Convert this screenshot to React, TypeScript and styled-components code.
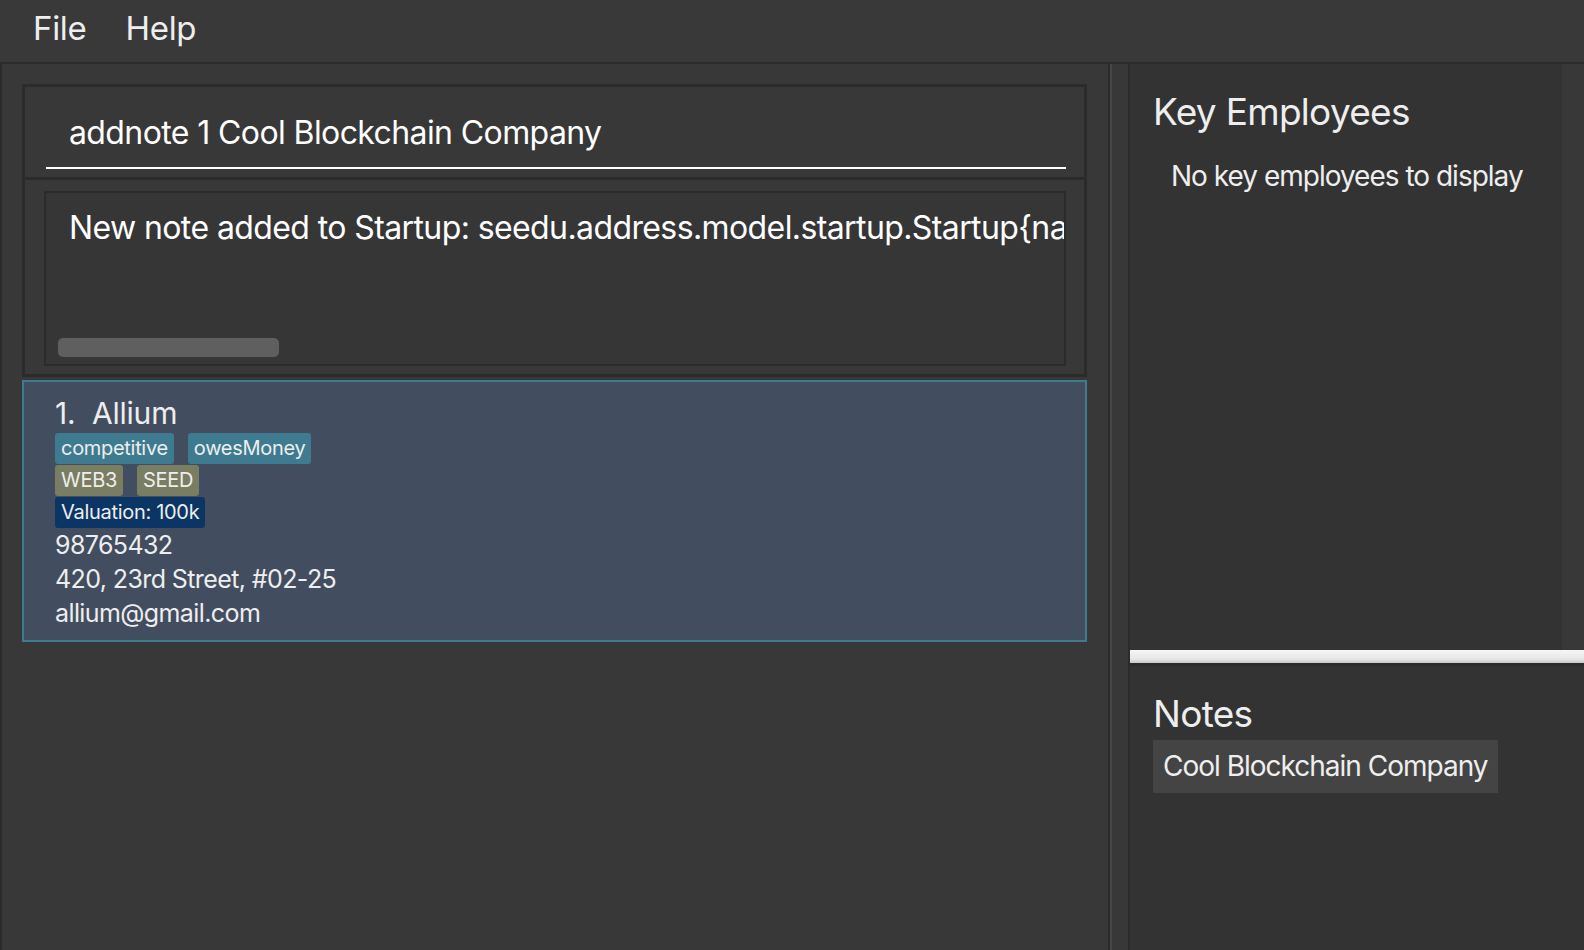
import React from 'react';
import styled, { createGlobalStyle } from 'styled-components';

const Global = createGlobalStyle`
  html, body {
    margin: 0;
    padding: 0;
    background: #383838;
    font-family: Inter, "Noto Sans", sans-serif;
  }
`;

const S = {
  Window: styled.div`
    width: 1584px;
    height: 950px;
    display: flex;
    flex-direction: column;
    overflow: hidden;
    background: #383838;
  `,
  MenuBar: styled.div`
    height: 64px;
    box-sizing: border-box;
    display: flex;
    align-items: center;
    gap: 39px;
    padding: 0 0 5px 33px;
    border-bottom: 2px solid #2b2b2b;
    background: #393939;
  `,
  MenuItem: styled.span`
    color: #eeeeee;
    font-size: 33px;
    line-height: 1;
    letter-spacing: -0.3px;
  `,
  Main: styled.div`
    flex: 1;
    display: flex;
    min-height: 0;
  `,
  LeftPane: styled.div`
    width: 1086px;
    border-left: 2px solid #2b2b2b;
    padding: 20px 0 0 20px;
    display: flex;
    flex-direction: column;
    background: #383838;
  `,
  Splitter: styled.div`
    width: 18px;
    border-left: 2px solid #2b2b2b;
    box-shadow: inset 2px 0 0 #474747;
    background: #383838;
  `,
  CommandBox: styled.div`
    width: 1065px;
    box-sizing: border-box;
    height: 96px;
    border: 3px solid #2b2b2b;
    padding: 0 18px 0 21px;
    display: flex;
    align-items: flex-end;
  `,
  CommandField: styled.div`
    flex: 1;
    height: 79px;
    box-sizing: border-box;
    border-bottom: 2px solid #ffffff;
    padding: 0 0 14px 23px;
    display: flex;
    align-items: flex-end;
    color: #ffffff;
    font-size: 32px;
    line-height: 40px;
    letter-spacing: -0.6px;
    margin-bottom: 8px;
  `,
  ResultOuter: styled.div`
    width: 1065px;
    box-sizing: border-box;
    height: 197px;
    border: 3px solid #2b2b2b;
    border-top: none;
    padding: 11px 18px 8px 19px;
  `,
  ResultInner: styled.div`
    height: 100%;
    box-sizing: border-box;
    border: 2px solid #2b2b2b;
    background: #363636;
    display: flex;
    flex-direction: column;
    justify-content: space-between;
    overflow: hidden;
    padding: 15px 0 7px 0;
  `,
  ResultText: styled.div`
    color: #ffffff;
    font-size: 32px;
    line-height: 40px;
    letter-spacing: -0.6px;
    white-space: nowrap;
    overflow: hidden;
    padding-left: 23px;
    padding-right: 2px;
  `,
  ScrollThumb: styled.div`
    margin-left: 12px;
    width: 221px;
    height: 19px;
    border-radius: 5px;
    background: #5f5f5f;
  `,
  Card: styled.div`
    width: 1065px;
    box-sizing: border-box;
    margin-top: 3px;
    height: 262px;
    border: 2px solid #3e7b91;
    background: #424d5f;
    padding: 12px 0 0 31px;
    color: #eeeeee;
  `,
  CardTitle: styled.div`
    font-size: 30px;
    line-height: 38px;
    letter-spacing: -0.2px;
    white-space: pre;
  `,
  TagRow: styled.div`
    display: flex;
    gap: 14px;
    margin-top: 1px;
  `,
  Tag: styled.span<{ $bg: string }>`
    background: ${(p) => p.$bg};
    color: #eeeeee;
    font-size: 20px;
    line-height: 31px;
    height: 31px;
    padding: 0 6px;
    border-radius: 3px;
    letter-spacing: -0.3px;
  `,
  Field: styled.div`
    font-size: 25px;
    line-height: 34px;
    letter-spacing: -0.6px;
  `,
  RightPane: styled.div`
    flex: 1;
    display: flex;
    flex-direction: column;
    border-left: 2px solid #2b2b2b;
  `,
  Upper: styled.div`
    height: 586px;
    display: flex;
    background: #333333;
  `,
  PanelBody: styled.div<{ $pt: number }>`
    flex: 1;
    padding: ${(p) => p.$pt}px 0 0 23px;
    color: #eeeeee;
  `,
  SideStrip: styled.div`
    width: 22px;
    background: #383838;
  `,
  Heading: styled.div`
    font-size: 37px;
    line-height: 46px;
    letter-spacing: -0.7px;
  `,
  Empty: styled.div`
    font-size: 28px;
    line-height: 36px;
    margin: 23px 0 0 18px;
    letter-spacing: -1px;
  `,
  HSplit: styled.div`
    height: 13px;
    background: linear-gradient(#f6f6f6, #e6e6e6 70%, #c8c8c8);
    border-bottom: 3px solid #2b2b2b;
  `,
  Lower: styled.div`
    flex: 1;
    background: #333333;
    display: flex;
  `,
  NoteChip: styled.div`
    display: inline-block;
    margin-top: 3px;
    background: #444444;
    padding: 0 10px;
    font-size: 28px;
    line-height: 53px;
    letter-spacing: -1px;
  `,
};

export default function App() {
  return (
    <>
      <Global />
      <S.Window>
        <S.MenuBar>
          <S.MenuItem>File</S.MenuItem>
          <S.MenuItem>Help</S.MenuItem>
        </S.MenuBar>
        <S.Main>
          <S.LeftPane>
            <S.CommandBox>
              <S.CommandField>addnote 1 Cool Blockchain Company</S.CommandField>
            </S.CommandBox>
            <S.ResultOuter>
              <S.ResultInner>
                <S.ResultText>
                  New note added to Startup: seedu.address.model.startup.Startup{'{'}name=Allium, phone=98765432,
                  email=allium@gmail.com{'}'}
                </S.ResultText>
                <S.ScrollThumb />
              </S.ResultInner>
            </S.ResultOuter>
            <S.Card>
              <S.CardTitle>1.  Allium</S.CardTitle>
              <S.TagRow>
                <S.Tag $bg="#3e7b91">competitive</S.Tag>
                <S.Tag $bg="#3e7b91">owesMoney</S.Tag>
              </S.TagRow>
              <S.TagRow>
                <S.Tag $bg="#797d61">WEB3</S.Tag>
                <S.Tag $bg="#797d61">SEED</S.Tag>
              </S.TagRow>
              <S.TagRow>
                <S.Tag $bg="#0b3564">Valuation: 100k</S.Tag>
              </S.TagRow>
              <S.Field>98765432</S.Field>
              <S.Field>420, 23rd Street, #02-25</S.Field>
              <S.Field>allium@gmail.com</S.Field>
            </S.Card>
          </S.LeftPane>
          <S.Splitter />
          <S.RightPane>
            <S.Upper>
              <S.PanelBody $pt={25}>
                <S.Heading>Key Employees</S.Heading>
                <S.Empty>No key employees to display</S.Empty>
              </S.PanelBody>
              <S.SideStrip />
            </S.Upper>
            <S.HSplit />
            <S.Lower>
              <S.PanelBody $pt={25}>
                <S.Heading>Notes</S.Heading>
                <S.NoteChip>Cool Blockchain Company</S.NoteChip>
              </S.PanelBody>
            </S.Lower>
          </S.RightPane>
        </S.Main>
      </S.Window>
    </>
  );
}
